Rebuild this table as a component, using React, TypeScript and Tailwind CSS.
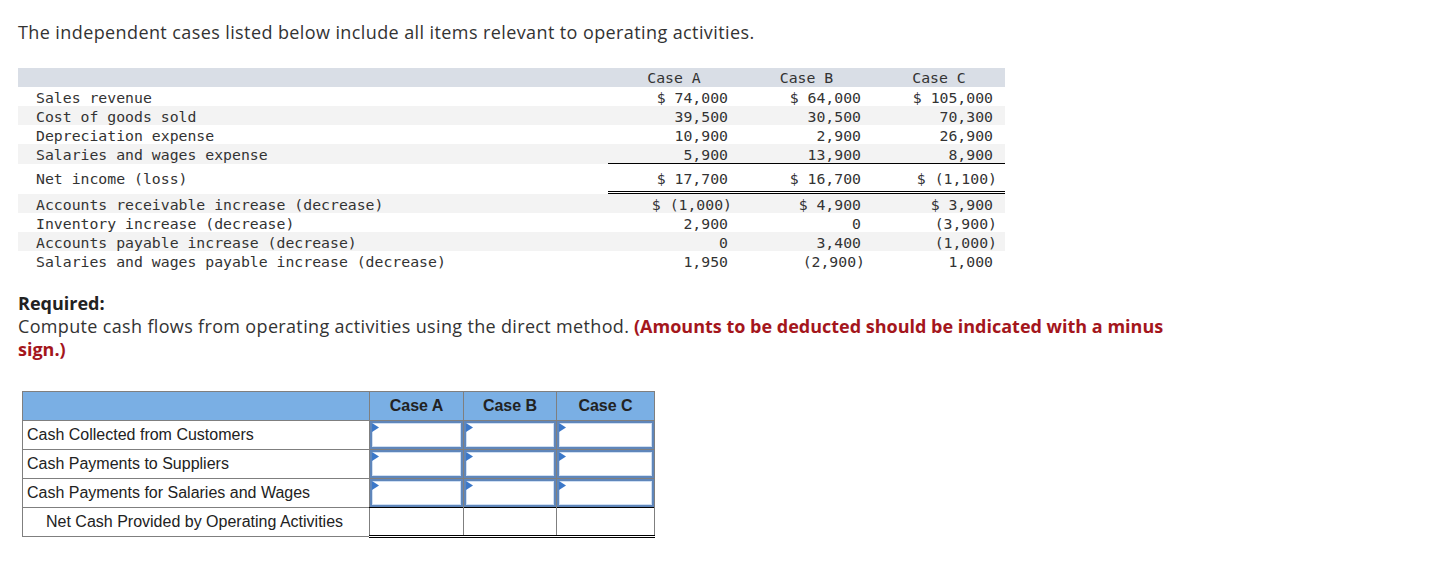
const mono = { fontFamily: '"DejaVu Sans Mono", "Liberation Mono", monospace' };

type Row = {
  label: string;
  values: string[];
  stripe: boolean;
  kind?: "underline" | "total";
};

const rows: Row[] = [
  { label: "Sales revenue", values: ["$ 74,000", "$ 64,000", "$ 105,000"], stripe: false },
  { label: "Cost of goods sold", values: ["39,500", "30,500", "70,300"], stripe: true },
  { label: "Depreciation expense", values: ["10,900", "2,900", "26,900"], stripe: false },
  { label: "Salaries and wages expense", values: ["5,900", "13,900", "8,900"], stripe: true, kind: "underline" },
  { label: "Net income (loss)", values: ["$ 17,700", "$ 16,700", "$ (1,100)"], stripe: false, kind: "total" },
  { label: "Accounts receivable increase (decrease)", values: ["$ (1,000)", "$ 4,900", "$ 3,900"], stripe: true },
  { label: "Inventory increase (decrease)", values: ["2,900", "0", "(3,900)"], stripe: false },
  { label: "Accounts payable increase (decrease)", values: ["0", "3,400", "(1,000)"], stripe: true },
  { label: "Salaries and wages payable increase (decrease)", values: ["1,950", "(2,900)", "1,000"], stripe: false },
];

function Value({ v }: { v: string }) {
  // closing parens hang slightly past the digit column
  const paren = v.endsWith(")");
  return <span className={paren ? "mr-[-4px]" : ""}>{v}</span>;
}

function DataTable() {
  return (
    <div className="w-[987px] text-[14.8px] text-[#333]" style={mono}>
      <div className="grid grid-cols-[590px_132px_133px_132px] h-[19px] pt-[2px] bg-[#d9dee6] items-center leading-none">
        <div />
        <div className="text-center">Case A</div>
        <div className="text-center">Case B</div>
        <div className="text-center">Case C</div>
      </div>
      {rows.map((r) => (
        <div
          key={r.label}
          className={`grid grid-cols-[590px_132px_133px_132px] ${r.stripe ? "bg-[#f3f3f3]" : "bg-white"}`}
        >
          <div
            className={`pl-[18px] pt-[3px] flex items-center whitespace-pre ${
              r.kind === "total" ? "h-[28px]" : "h-[19px]"
            }`}
          >
            {r.label}
          </div>
          {r.values.map((v, i) => (
            <div
              key={i}
              className={`flex items-center justify-end pr-[12px] pt-[3px] whitespace-pre ${
                r.kind === "total"
                  ? "h-[30px] border-b-[3px] border-double border-black"
                  : r.kind === "underline"
                  ? "h-[20px] border-b border-black"
                  : "h-[19px]"
              }`}
            >
              <Value v={v} />
            </div>
          ))}
        </div>
      ))}
    </div>
  );
}

function Flag() {
  return (
    <svg className="absolute left-0 top-0" width="7" height="9" viewBox="0 0 7 9">
      <path d="M0 0 L7 4.5 L0 9 Z" fill="#3b78c9" />
    </svg>
  );
}

function InputCell() {
  return (
    <td className="border border-[#7f7f7f] p-0 h-[29px]">
      <div className="relative h-[28px] border-2 border-[#5f86ba] bg-white">
        <div className="absolute inset-0 border border-[#cfdff3]" />
        <Flag />
      </div>
    </td>
  );
}

const answerRows = [
  "Cash Collected from Customers",
  "Cash Payments to Suppliers",
  "Cash Payments for Salaries and Wages",
];

function AnswerTable() {
  return (
    <table
      className="ml-[4px] border-collapse table-fixed text-[16px] text-[#222]"
      style={{ fontFamily: '"Liberation Sans", Arial, sans-serif' }}
    >
      <colgroup>
        <col className="w-[347px]" />
        <col className="w-[94px]" />
        <col className="w-[93px]" />
        <col className="w-[98px]" />
      </colgroup>
      <thead>
        <tr className="bg-[#7aafe4] h-[29px]">
          <th className="border border-[#7f7f7f]" />
          <th className="border border-[#7f7f7f] font-bold">Case A</th>
          <th className="border border-[#7f7f7f] font-bold">Case B</th>
          <th className="border border-[#7f7f7f] font-bold">Case C</th>
        </tr>
      </thead>
      <tbody>
        {answerRows.map((label) => (
          <tr key={label} className="h-[29px]">
            <td className="border border-[#7f7f7f] pl-[4px] whitespace-nowrap">{label}</td>
            <InputCell />
            <InputCell />
            <InputCell />
          </tr>
        ))}
        <tr className="h-[29px]">
          <td className="border border-[#7f7f7f] pl-[23px] whitespace-nowrap">
            Net Cash Provided by Operating Activities
          </td>
          <td className="border border-[#7f7f7f] border-t-black border-b-[3px] border-b-black border-double" />
          <td className="border border-[#7f7f7f] border-t-black border-b-[3px] border-b-black border-double" />
          <td className="border border-[#7f7f7f] border-t-black border-b-[3px] border-b-black border-double" />
        </tr>
      </tbody>
    </table>
  );
}

export default function App() {
  return (
    <div
      className="min-h-screen bg-white px-[18px] pt-[19px] text-[#333]"
      style={{ fontFamily: '"Open Sans", Lato, sans-serif' }}
    >
      <p className="text-[18px] leading-[26px] tracking-[0.4px]">
        The independent cases listed below include all items relevant to operating activities.
      </p>

      <div className="mt-[23px]">
        <DataTable />
      </div>

      <div className="mt-[22px] w-[1160px] text-[18px] leading-[23px]">
        <p className="font-bold text-[#222]">Required:</p>
        <p>
          <span className="tracking-[0.34px]">
            Compute cash flows from operating activities using the direct method.
          </span>{" "}
          <span className="font-bold text-[#a4161c]">
            (Amounts to be deducted should be indicated with a minus sign.)
          </span>
        </p>
      </div>

      <div className="mt-[30px]">
        <AnswerTable />
      </div>
    </div>
  );
}
